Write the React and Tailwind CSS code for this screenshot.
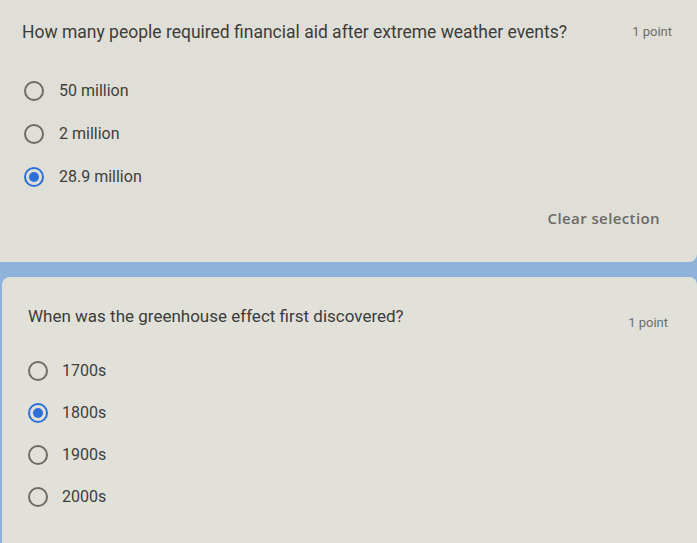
import React from 'react';

const font = { fontFamily: 'Roboto, "Liberation Sans", sans-serif' };

function Radio({ checked }) {
  if (checked) {
    return (
      <span className="flex h-[20px] w-[20px] shrink-0 items-center justify-center rounded-full border-2 border-[#2b6fd8]">
        <span className="h-[10px] w-[10px] rounded-full bg-[#2b6fd8]" />
      </span>
    );
  }
  return <span className="h-[20px] w-[20px] shrink-0 rounded-full border-2 border-[#6c6b67]" />;
}

export default function App() {
  const first = [
    { label: '50 million' },
    { label: '2 million' },
    { label: '28.9 million', checked: true },
  ];
  const second = [
    { label: '1700s' },
    { label: '1800s', checked: true },
    { label: '1900s' },
    { label: '2000s' },
  ];

  return (
    <div style={font} className="flex h-[543px] w-[697px] flex-col gap-[15px] overflow-hidden bg-[#8fb2dc]">
      {/* first question */}
      <div className="h-[262px] shrink-0 rounded-br-lg bg-[#e0dfd7] pl-[22px] pr-[25px] pt-[20px]">
        <div className="flex h-[24px] items-center justify-between">
          <span className="text-[17.5px] text-[#3c3c3a]">
            How many people required financial aid after extreme weather events?
          </span>
          <span className="text-[13px] text-[#6e6e6a]">1 point</span>
        </div>
        <div className="mt-[25px] pl-[2px]">
          {first.map((o) => (
            <div key={o.label} className="flex h-[43px] items-center gap-[15px]">
              <Radio checked={o.checked} />
              <span className="text-[16px] text-[#3e3e3c]">{o.label}</span>
            </div>
          ))}
        </div>
        <div className="mt-[10px] flex justify-end pr-[12px]">
          <span
            className="text-[15px] font-semibold leading-[20px] tracking-[0.4px] text-[#6a6a66]"
            style={{ fontFamily: '"Open Sans", "Liberation Sans", sans-serif' }}
          >
            Clear selection
          </span>
        </div>
      </div>

      {/* second question */}
      <div className="ml-[2px] flex-1 rounded-tl-lg rounded-tr-lg bg-[#e1e1d9] pl-[26px] pr-[29px] pt-[27px]">
        <div className="flex items-start justify-between">
          <span className="text-[17px] leading-[24px] text-[#3c3c3a]">
            When was the greenhouse effect first discovered?
          </span>
          <span className="mt-[9px] text-[13px] text-[#6e6e6a]">1 point</span>
        </div>
        <div className="mt-[17px] pl-0">
          {second.map((o) => (
            <div key={o.label} className="flex h-[42px] items-center gap-[14px]">
              <Radio checked={o.checked} />
              <span className="text-[16px] text-[#3e3e3c]">{o.label}</span>
            </div>
          ))}
        </div>
      </div>
    </div>
  );
}
